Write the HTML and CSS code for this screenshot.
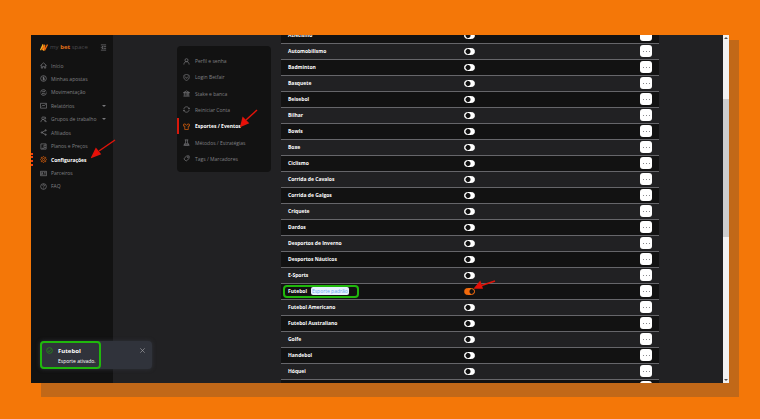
FILE: index.html
```
<!DOCTYPE html>
<html lang="pt">
<head>
  <meta charset="UTF-8">
  <title>My Bet Space</title>
  <link rel="stylesheet" href="styles.css">
</head>
<body>

  <main class="window">
    <nav class="sidebar">
      <div class="brand">
        <svg class="logo" viewBox="0 0 18 16"><path d="M1 14 6 3l2 9 3-9" stroke="#f5b524"/><path d="M5 14 9 4l2 9 6-12" stroke="#f26a0c"/></svg>
        <span class="name">my <b>bet</b> space</span>
        <button class="collapse" aria-label="Menu"><svg viewBox="0 0 16 16"><path d="M2 2h12M8 6h6M8 10h6M2 14h12M6 5 3 8l3 3z"/></svg></button>
      </div>
      <div class="links">
        <a href="#"><svg viewBox="0 0 16 16"><path d="M1 8 8 2l7 6M3 7v7h3v-4h4v4h3V7"/></svg>Início</a>
        <a href="#"><svg viewBox="0 0 16 16"><circle cx="8" cy="8" r="6.5"/><path d="M10 5H7v3h3v3H6M8 4v8"/></svg>Minhas apostas</a>
        <a href="#"><svg viewBox="0 0 16 16"><circle cx="8" cy="8" r="6.5" stroke-dasharray="17 3"/><path d="M5 6h6L9 4M11 10H5l2 2"/></svg>Movimentação</a>
        <a href="#"><svg viewBox="0 0 16 16"><path d="M1 3h14v11H1zM4 10l3-3 2 2 4-4"/></svg>Relatórios<i class="caret"></i></a>
        <a href="#"><svg viewBox="0 0 16 16"><circle cx="7" cy="5" r="3"/><path d="M2 14c0-8 10-8 10 0M10 2c4 0 4 5 1 6M11 9l4 5"/></svg>Grupos de trabalho<i class="caret"></i></a>
        <a href="#"><svg viewBox="0 0 16 16"><path d="M13 3 4 8l9 5"/><circle cx="4" cy="8" r="1.5"/><circle cx="13" cy="3" r="1.5"/><circle cx="13" cy="13" r="1.5"/></svg>Afiliados</a>
        <a href="#"><svg viewBox="0 0 16 16"><path d="M2 2h12v12H2zM14 5H9v5h5M4 12h6"/></svg>Planos e Preços</a>
        <a href="#" class="active"><svg viewBox="0 0 16 16"><path d="m8 1 2 2 3 0 0 3 2 2-2 2 0 3-3 0-2 2-2-2-3 0 0-3-2-2 2-2 0-3 3 0z"/><circle cx="8" cy="8" r="2.5"/></svg>Configurações</a>
        <a href="#"><svg viewBox="0 0 16 16"><path d="M1 3h14v10H1zM9 6h4M9 9h4M3 11c0-3 4-3 4 0"/><circle cx="5" cy="7" r="1.5"/></svg>Parceiros</a>
        <a href="#"><svg viewBox="0 0 16 16"><circle cx="8" cy="8" r="6.5"/><path d="M6 6c0-3 4-3 4 0 0 2-2 1-2 4M8 11v1.500"/></svg>FAQ</a>
      </div>
    </nav>

    <nav class="submenu">
      <div class="links">
        <a href="#"><svg viewBox="0 0 16 16"><circle cx="8" cy="5" r="3.500"/><path d="M2 15c0-9 12-9 12 0"/></svg>Perfil e senha</a>
        <a href="#"><svg viewBox="0 0 16 16"><path d="M8 1 2 3v6c0 3 6 6 6 6s6-3 6-6V3zM5 6l3 4 3-4"/></svg>Login Betfair</a>
        <a href="#"><svg viewBox="0 0 16 16"><path d="m1 6 7-4 7 4zM3 6v7M7 6v7M10 6v7M13 6v7M1 14h14"/></svg>Stake e banca</a>
        <a href="#"><svg viewBox="0 0 16 16"><path d="M14 7C13 0 3 0 2 7M2 9c1 7 11 7 12 0M12 6l2 1 1-3M4 10l-2-1-1 3"/></svg>Reiniciar Conta</a>
        <a href="#" class="active"><svg viewBox="0 0 16 16"><path d="M5 2 1 3v4h3v8h8V7h3V3l-4-1c-1 4-5 4-6 0z"/></svg>Esportes / Eventos</a>
        <a href="#"><svg viewBox="0 0 16 16"><path d="M4 2h8M6 2v5l-3 7h10l-3-7V2M4 11h8M1 14h14"/></svg>Métodos / Estratégias</a>
        <a href="#"><svg viewBox="0 0 16 16"><path d="m8 2 6 0 0 6-7 6-5-5z"/><circle cx="11" cy="5" r="1"/></svg>Tags / Marcadores</a>
      </div>
    </nav>

    <section class="content">
      <table>
        <tbody id="sports"></tbody>
      </table>
    </section>

    <div class="scrollbar">
      <i class="up"></i>
      <div class="thumb"></div>
      <i class="down"></i>
    </div>

    <div class="toast">
      <div class="message">
        <svg viewBox="0 0 16 16"><circle cx="8" cy="8" r="6.5"/><path d="m5 8 2 3 4-5"/></svg>
        <div>
          <strong>Futebol</strong>
          <p>Esporte ativado.</p>
        </div>
      </div>
      <button class="close" aria-label="Fechar"><svg viewBox="0 0 16 16"><path d="m3 3 10 10M13 3 3 13"/></svg></button>
    </div>

    <svg class="arrow to-settings" viewBox="0 0 25 20"><path d="M24 1 8 12"/><path class="head" d="m1 18 4-8 4 5z"/></svg>
    <svg class="arrow to-sports" viewBox="0 0 18 18"><path d="M17 1 6 11"/><path class="head" d="m1 17 2-8 5 5z"/></svg>
    <svg class="arrow to-toggle" viewBox="0 0 22 10"><path d="M21 1 6 6"/><path class="head" d="m1 8 5-6 2 6z"/></svg>
  </main>

  <script>
    // the first and last rows are cut by the window edges
    const sports = ['Atletismo', 'Automobilismo', 'Badminton', 'Basquete', 'Beisebol', 'Bilhar', 'Bowls', 'Boxe',
      'Ciclismo', 'Corrida de Cavalos', 'Corrida de Galgos', 'Críquete', 'Dardos', 'Desportos de Inverno',
      'Desportos Náuticos', 'E-Sports', 'Futebol', 'Futebol Americano', 'Futebol Australiano', 'Golfe',
      'Handebol', 'Hóquei', ''];

    document.getElementById('sports').innerHTML = sports.map(name => {
      const on = name === 'Futebol';
      const label = on ? `<span class="marked">${name}<span class="badge">Esporte padrão</span></span>` : name;
      return `<tr>
        <td class="sport">${label}</td>
        <td><input type="checkbox" class="switch" aria-label="Ativar" ${on ? 'checked' : ''}></td>
        <td class="actions"><button class="more" aria-label="Mais"><i></i><i></i><i></i></button></td>
      </tr>`;
    }).join('');
  </script>
</body>
</html>
```
FILE: styles.css
```
* {
  box-sizing: border-box;
}

body {
  margin: 0;
  height: 100vh;
  padding: 35px 31px 36px;
  background: #f47708;
  font-family: "Open Sans", "Noto Sans", sans-serif;
  font-size: 5px;
  line-height: 8px;
  color: #fff;
}

button {
  padding: 0;
  border: 0;
  background: none;
  display: flex;
}

svg {
  width: 7px;
  height: 7px;
  flex: none;
  fill: none;
  stroke: currentColor;
  stroke-width: 1.5;
}

.window {
  position: relative;
  display: flex;
  align-items: flex-start;
  height: 100%;
  background: #212123;
  box-shadow: 10px 5px #c16818, 10px 14px #c16818;
}

.sidebar {
  width: 82px;
  height: 100%;
  background: #121212;
  padding-top: 8px;
}

.links {
  display: flex;
  flex-direction: column;
  justify-content: space-between;
}

.sidebar .links {
  height: 134px;
}

.links a {
  display: flex;
  align-items: center;
  color: #808084;
  text-decoration: none;
  white-space: nowrap;
}

.sidebar a {
  height: 13px;
  padding: 0 7px 0 9px;
  gap: 4px;
}

.links a.active {
  color: #fff;
  font-weight: 700;
}

.sidebar a.active {
  border-left: 2px dotted #f5400c;
  padding-left: 7px;
}

.active svg {
  color: #f26a0c;
}

.brand {
  display: flex;
  align-items: center;
  height: 8px;
  margin-bottom: 8px;
  padding: 0 6px 0 9px;
  gap: 2px;
  color: #4b4b4f;
}

.brand b {
  color: #e0701a;
}

.logo {
  width: 8px;
  stroke-width: 3;
}

.name {
  font-size: 6px;
}

.collapse {
  margin-left: auto;
  color: #808084;
}

.caret {
  margin-left: auto;
  border: 2px solid transparent;
  border-top-color: #77777a;
  border-bottom: 0;
}

.submenu {
  width: 94px;
  margin: 11px 0 0 64px;
  padding: 7px 0 5px;
  border-radius: 4px;
  background: #121212;
}

.submenu .links {
  height: 114px;
}

.submenu a {
  height: 16px;
  padding-left: 6px;
  gap: 5px;
}

.submenu a.active {
  border-left: 2px solid #d8180c;
  padding-left: 4px;
}

.content {
  flex: 1;
  height: 100%;
  margin: 0 64px 0 10px;
  overflow: hidden;
}

table {
  width: 100%;
  margin-top: -8px;
  border-collapse: collapse;
}

tr {
  height: 16px;
  background: #121212;
  border-bottom: 1px solid #66666a;
}

tr:nth-child(even) {
  background: #212123;
}

td {
  padding: 0;
}

.sport {
  width: 183px;
  padding-left: 7px;
  font-weight: 700;
}

.switch {
  appearance: none;
  display: block;
  width: 11px;
  height: 7px;
  margin: 1px 0 0;
  border: 1px solid #fff;
  border-radius: 4px;
  background: radial-gradient(circle at 3px 50%, #121212 2px, #fff 3px);
}

.switch:checked {
  border-color: #f26a0c;
  background: radial-gradient(circle at 7px 50%, #121212 2px, #f26a0c 3px);
}

.more {
  width: 12px;
  height: 12px;
  margin-left: auto;
  margin-right: 7px;
  border-radius: 3px;
  background: #fff;
  align-items: center;
  justify-content: center;
  gap: 2px;
}

.more i {
  width: 1px;
  height: 1px;
  background: #88888c;
}

.marked {
  display: inline-flex;
  align-items: center;
  gap: 4px;
  height: 13px;
  margin-left: -5px;
  padding: 0 8px 0 3px;
  border: 2px solid #20b80c;
  border-radius: 4px;
}

.badge {
  padding: 0 1px;
  border-radius: 2px;
  background: #e6f1ff;
  color: #6ba8f0;
  font-weight: 400;
}

.scrollbar {
  display: flex;
  flex-direction: column;
  align-items: center;
  justify-content: space-between;
  width: 6px;
  height: 100%;
  padding: 2px 0;
  background: #f1f1f1;
}

.thumb {
  width: 6px;
  height: 40%;
  margin-bottom: 82px;
  background: #cdcdcd;
}

.up, .down {
  border: 2px solid transparent;
}

.up {
  border-top: 0;
  border-bottom-color: #505050;
}

.down {
  border-bottom: 0;
  border-top-color: #505050;
}

.toast {
  position: absolute;
  left: 9px;
  bottom: 14px;
  display: flex;
  width: 112px;
  border-radius: 4px;
  background: #30333b;
  box-shadow: 0 0 4px #30333b;
}

.message {
  display: flex;
  gap: 5px;
  width: 61px;
  height: 28px;
  padding: 4px;
  border: 2px solid #20b80c;
  border-radius: 4px;
}

.message svg {
  color: #20a010;
}

.message strong {
  display: block;
  font-size: 6px;
}

.message p {
  margin: 2px 0 0;
  white-space: nowrap;
}

.close {
  margin: 6px 6px 0 auto;
  color: #a0a0a4;
  align-self: flex-start;
}

.arrow {
  position: absolute;
  stroke: #e0140a;
}

.arrow .head {
  fill: #f00c08;
}

.to-settings {
  left: 60px;
  top: 104px;
  width: 25px;
  height: 20px;
}

.to-sports {
  left: 209px;
  top: 74px;
  width: 18px;
  height: 18px;
}

.to-toggle {
  left: 443px;
  top: 245px;
  width: 22px;
  height: 10px;
}
```
